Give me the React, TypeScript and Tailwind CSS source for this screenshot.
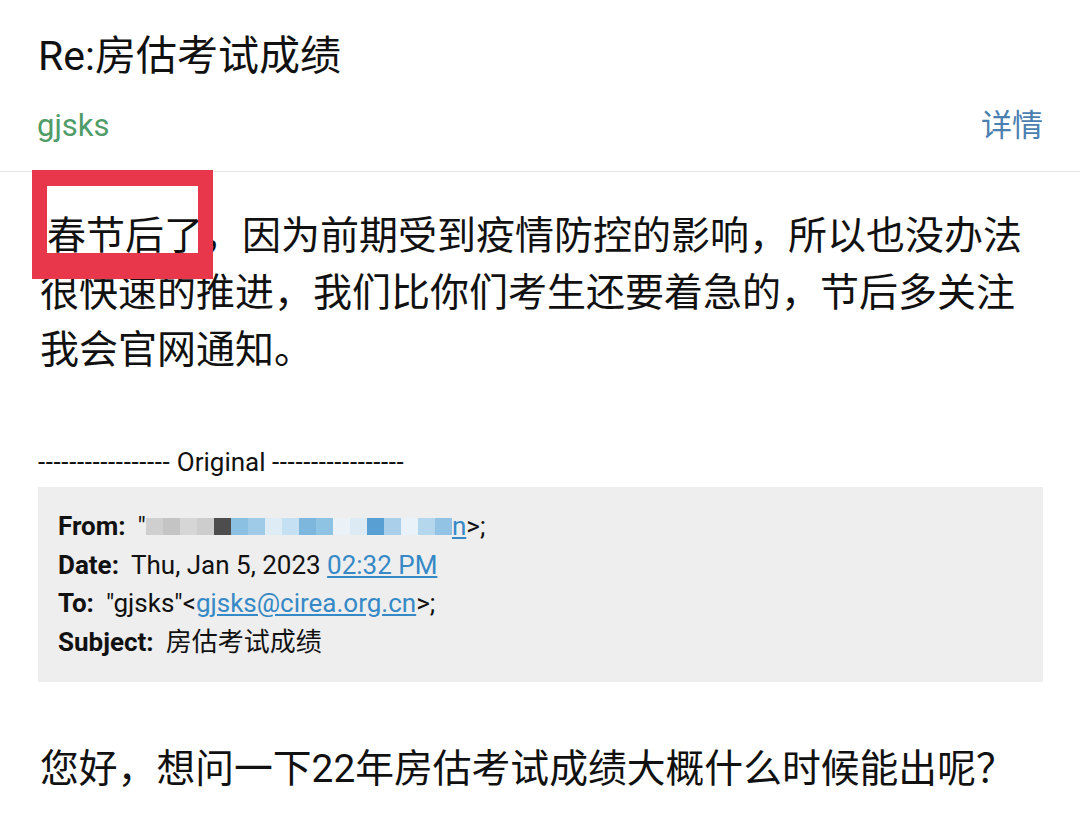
import React from "react";

const FONT = "font-['Roboto','Noto_Sans_CJK_SC',sans-serif]";

const blocks = [
  "#cfcfcf",
  "#c4c4c4",
  "#d6d6d6",
  "#cdcdcd",
  "#4d4d4d",
  "#8cc0e2",
  "#9fcbe8",
  "#deecf6",
  "#c4e0f2",
  "#7db7dd",
  "#8fc3e4",
  "#eaf2f8",
  "#dceaf4",
  "#58a0d3",
  "#a9cfea",
  "#e9f2f8",
  "#b5d7ed",
  "#93c3e4",
];

export default function App() {
  return (
    <div className={`relative w-[1080px] h-[834px] bg-white overflow-hidden text-[#111111] ${FONT}`}>
      {/* Header */}
      <div className="px-[38px] pt-[28px]">
        <h1 className="text-[41px] leading-[56px] font-normal">Re:房估考试成绩</h1>
      </div>
      <div className="flex items-center justify-between pl-[37px] pr-[37px] h-[50px] mt-[17px]">
        <span className="text-[31px] text-[#4f9c68]">gjsks</span>
        <span className="text-[31px] text-[#4a80b0]">详情</span>
      </div>
      <div className="mt-[20px] h-px bg-[#e8e8e8]" />

      {/* Body */}
      <div className="px-[40px] pt-[36px]">
        <p className="text-[39px] leading-[57px] w-[1000px]">
          <span className="ml-[7px]">春节后了</span>，因为前期受到疫情防控的影响，所以也没办法很快速的推进，我们比你们考生还要着急的，节后多关注我会官网通知。
        </p>

        <div className="mt-[66px] -ml-[2px] text-[26px] leading-[34px] whitespace-pre">
          <span className="tracking-[0.6px]">-----------------</span> Original <span className="tracking-[0.6px]">-----------------</span>
        </div>

        <div className="mt-[8px] -ml-[2px] w-[1005px] bg-[#eeeeee] pl-[20px] pt-[20px] pb-[21px] text-[26px] leading-[38.5px]">
          <div className="flex items-center">
            <span className="font-bold mr-[12px]">From:</span>
            <span>"</span>
            <span className="inline-flex items-center h-[17px]">
              {blocks.map((c, i) => (
                <span key={i} className="inline-block w-[17px] h-[17px]" style={{ backgroundColor: c }} />
              ))}
            </span>
            <span className="text-[#3589c6] underline">n</span>
            <span>&gt;;</span>
          </div>
          <div>
            <span className="font-bold mr-[12px]">Date:</span>
            <span>Thu, Jan 5, 2023 </span>
            <span className="text-[#3589c6] underline">02:32 PM</span>
          </div>
          <div>
            <span className="font-bold mr-[12px]">To:</span>
            <span>"gjsks"&lt;</span>
            <span className="text-[#3589c6] underline">gjsks@cirea.org.cn</span>
            <span>&gt;;</span>
          </div>
          <div>
            <span className="font-bold mr-[12px]">Subject:</span>
            <span>房估考试成绩</span>
          </div>
        </div>

        <p className="mt-[58px] text-[38.8px] leading-[57px]">您好，想问一下22年房估考试成绩大概什么时候能出呢？</p>
      </div>

      {/* Red annotation box */}
      <div className="absolute left-[32px] top-[170px] w-[181px] h-[109px] border-[#e8364a] border-l-[15px] border-r-[15px] border-t-[16px] border-b-[26px]" />
    </div>
  );
}
